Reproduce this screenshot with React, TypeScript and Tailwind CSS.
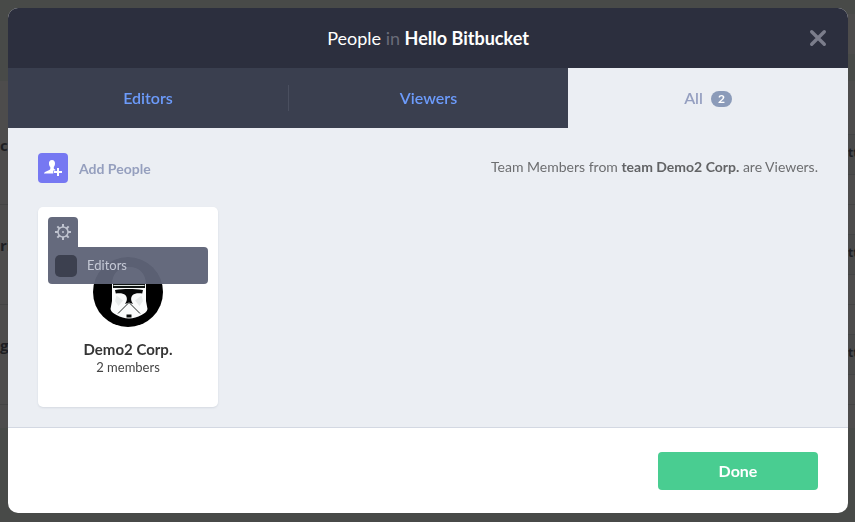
import React from "react";

const rows = [
  { id: 1, left: "c", right: "tt" },
  { id: 2, left: "ri", right: "tt" },
  { id: 3, left: "g", right: "tt" },
];

function Backdrop() {
  return (
    <div aria-hidden="true" className="flex h-screen flex-col overflow-hidden bg-[#484a48] text-[#1d1e22]">
      <div className="flex h-[81px] shrink-0 justify-end pt-[14px]">
        <div className="h-10 w-2 bg-[#4d4c4c]" />
      </div>
      <div className="h-[347px] shrink-0 bg-[#4d4c4c] pt-6">
        {rows.map((row) => (
          <div key={row.id} className="flex h-[100px] items-start justify-between border-b border-[#444444]">
            <span className="pt-7 font-['Open_Sans'] text-[15px] leading-6 font-bold">{row.left}</span>
            <span className="mt-[29px] h-[41px] w-[7px] border-y border-[#434445] bg-[#4a4a4a] font-['Open_Sans'] text-[12px] leading-9 font-bold">
              {row.right}
            </span>
          </div>
        ))}
      </div>
    </div>
  );
}

function CloseIcon() {
  return (
    <svg viewBox="0 0 18 18" className="size-[18px]" fill="none" stroke="#7b7d8b" strokeWidth="3.4" strokeLinecap="round">
      <path d="M2.700 2.700 15.300 15.300M15.300 2.700 2.700 15.300" />
    </svg>
  );
}

function AddPersonIcon() {
  return (
    <svg viewBox="0 0 30 30" className="size-[30px]" fill="#fff">
      <path d="M14 7c-2.300 0-3.300 1.700-3 4 .1 1.400.6 2.400 1.300 3.100v1.700c0 .6-.4.900-1 1.200l-3.300 1.400c-1.300.5-2 1.200-2 2.200h9.300v-3h2v-1.100c-.9-.3-1.500-.7-1.500-1.300v-1.100c.7-.7 1.100-1.700 1.200-3.100.2-2.300-.8-4-3-4Z" />
      <path d="M19 15h2v3h3v2h-3v3h-2v-3h-3v-2h3Z" />
    </svg>
  );
}

const teeth = [0, 45, 90, 135, 180, 225, 270, 315];

function GearIcon() {
  return (
    <svg viewBox="0 0 16 16" className="size-4" fill="none" stroke="#bfc3cf">
      <circle cx="8" cy="8" r="5" strokeWidth="1.500" />
      <circle cx="8" cy="8" r="1" fill="#bfc3cf" stroke="none" />
      {teeth.map((angle) => (
        <path key={angle} d="M8 0v3" strokeWidth="2" transform={`rotate(${angle} 8 8)`} />
      ))}
    </svg>
  );
}

function TrooperAvatar() {
  return (
    <svg viewBox="0 0 70 70" className="size-[70px]" role="img" aria-label="Demo2 Corp. avatar">
      <circle cx="35" cy="35" r="35" fill="#000" />
      <path d="M19 28c0-11 6-18 17-18s17 7 17 18v16l1.500 8c-.5 3-3 4.500-6 6-4 2-8 3.500-12.500 3.500S27.500 60 23.500 58c-3-1.500-5.500-3-6-6l1.500-8Z" fill="#fafbfb" />
      <path d="M20 26.500h32v4.500H20Z" fill="#101413" />
      <path d="M20.500 28.500h31" stroke="#dbe2df" strokeWidth="1" />
      <path d="M22 33c5-.8 9-1 14-1s9 .2 14 1l-.8 3.500c-4-.8-7.500-.3-9.500 1.500-1.500 1.500-1.700 3.500-1.500 5 .2 1.500 1 2.800 1.800 4L36 45.500 32 47c.8-1.200 1.600-2.500 1.800-4 .2-1.500 0-3.500-1.500-5-2-1.800-5.500-2.300-9.500-1.500Z" fill="#050606" />
      <path d="m23.500 38.500 6.500 5-4.500 5.500-3.500-5ZM48.500 38.500l-6.500 5 4.500 5.500 3.500-5Z" fill="#e7eaea" />
      <path d="M36 45.500 25 56.500M36 45.500l11 11" fill="none" stroke="#252a28" strokeWidth="1" />
      <path d="M33.500 57.500h5v3h-5Z" fill="#0a0c0b" />
    </svg>
  );
}

function TeamCard() {
  return (
    <article className="relative flex h-[200px] w-[180px] flex-col items-center rounded-[5px] bg-white pt-[50px] shadow-[0_1px_2px_rgba(60,70,100,0.12)]">
      <TrooperAvatar />
      <h2 className="mt-3 text-[15px] leading-5 font-bold text-[#353535]">Demo2 Corp.</h2>
      <p className="text-[13px] leading-4 text-[#454545]">2 members</p>

      <div className="absolute top-[10px] left-[10px] w-40">
        <button type="button" aria-label="Team settings" className="flex size-[30px] items-center justify-center rounded-t-[4px] bg-[#5f6478]/96">
          <GearIcon />
        </button>
        <label className="flex h-[37px] items-center gap-[10px] rounded-[4px] rounded-tl-none bg-[#5f6478]/96 pl-[7px] text-[13px] text-[#c5c9d6]">
          <input type="checkbox" className="size-[22px] appearance-none rounded-[5px] bg-[#3c404f] checked:bg-[#6c9bff]" />
          Editors
        </label>
      </div>
    </article>
  );
}

export default function App() {
  return (
    <div className="font-[Lato,'Open_Sans',sans-serif] antialiased">
      <Backdrop />
      <div className="fixed inset-0 pt-2 pr-[7px] pl-2">
        <section role="dialog" aria-modal="true" aria-labelledby="dialog-title" className="overflow-hidden rounded-[10px] bg-white">
          <header className="grid h-[60px] grid-cols-[1fr_auto_1fr] items-center bg-[#2c2f3e] px-[21px]">
            <h1 id="dialog-title" className="col-start-2 text-[18px] text-white">
              People <span className="text-[#696b78]">in</span> <strong className="font-bold">Hello Bitbucket</strong>
            </h1>
            <button type="button" aria-label="Close" className="justify-self-end">
              <CloseIcon />
            </button>
          </header>

          <div role="tablist" className="grid h-[60px] grid-cols-3 bg-[#3a3f4f] text-[16px] font-semibold text-[#6c9bfb]">
            <button type="button" role="tab" aria-selected="false">
              Editors
            </button>
            <button type="button" role="tab" aria-selected="false" className="flex items-center">
              <span className="h-[26px] w-px bg-[#4a4f5f]" />
              <span className="flex-1">Viewers</span>
            </button>
            <button type="button" role="tab" aria-selected="true" className="flex items-center justify-center gap-2 bg-[#ebeef3] text-[#959fc0]">
              All
              <span className="mt-[2px] h-4 w-[21px] rounded-full bg-[#8b9bb9] text-[12px] leading-4 font-bold text-white">2</span>
            </button>
          </div>

          <div className="border-b border-[#d3d8e2] bg-[#ebeef3] px-[30px] pt-[25px] pb-5">
            <div className="mb-6 flex items-start justify-between">
              <button type="button" className="flex items-center gap-[11px] text-[14px] font-bold text-[#959fbe]">
                <span className="rounded-[4px] bg-[#7678f2]">
                  <AddPersonIcon />
                </span>
                Add People
              </button>
              <p className="text-[14px] leading-7 text-[#6d6e70]">
                Team Members from <strong className="font-bold text-[#626365]">team Demo2 Corp.</strong> are Viewers.
              </p>
            </div>
            <TeamCard />
          </div>

          <footer className="flex justify-end px-[30px] pt-6 pb-[23px]">
            <button type="button" className="h-[38px] w-40 rounded-[4px] bg-[#49cd91] text-[16px] font-bold text-white">
              Done
            </button>
          </footer>
        </section>
      </div>
    </div>
  );
}
